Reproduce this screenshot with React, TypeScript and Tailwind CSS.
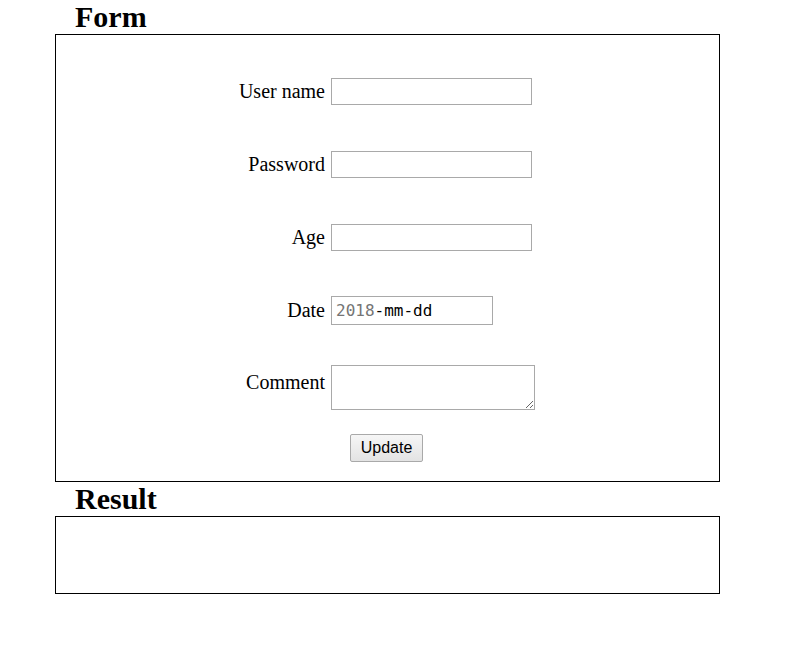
import { useState } from 'react'

const serif = "font-['Liberation_Serif','Times_New_Roman',serif]"

const Field = ({ label }: { label: string }) => (
  <div className="flex h-[73px] w-[303px] items-center">
    <label className="mb-[2px] w-[89px] text-right text-[20px] leading-[24px]">{label}</label>
    <input
      type="text"
      className="ml-[6px] h-[27px] w-[201px] border border-[#a9a9a9] bg-white px-[2px] text-[14px] outline-none"
    />
  </div>
)

export default function App() {
  const [comment, setComment] = useState('')

  return (
    <div className={`min-h-[646px] bg-white text-black ${serif}`}>
      <div className="ml-[55px] w-[665px]">
        <h2 className="h-[34px] pl-[20px] text-[30px] font-bold leading-[34px]">Form</h2>

        {/* Form box */}
        <div className="flex flex-col items-center border border-black pt-[20px] pb-[19px]">
          <Field label="User name" />
          <Field label="Password" />
          <Field label="Age" />

          <div className="flex h-[73px] w-[303px] items-center">
            <label className="mb-[2px] w-[89px] text-right text-[20px] leading-[24px]">Date</label>
            <div className="ml-[6px] flex h-[29px] w-[162px] items-center border border-[#a9a9a9] pl-[4px] font-['DejaVu_Sans_Mono',monospace] text-[16px]">
              <span className="text-[#757575]">2018</span>
              <span>-mm-dd</span>
            </div>
          </div>

          <div className="flex w-[303px] items-start pt-[18px]">
            <label className="mt-[5px] w-[89px] text-right text-[20px] leading-[24px]">Comment</label>
            <textarea
              value={comment}
              onChange={(e) => setComment(e.target.value)}
              className="ml-[6px] block h-[45px] w-[204px] border border-[#a9a9a9] bg-white text-[13px] outline-none"
            />
          </div>

          <button className="mt-[24px] mr-[2px] h-[28px] w-[73px] rounded-[2px] border border-[#a9a9a9] bg-gradient-to-b from-[#f6f6f6] to-[#e3e3e3] font-['Liberation_Sans',Arial,sans-serif] text-[16px] leading-none">
            Update
          </button>
        </div>

        <h2 className="h-[34px] pl-[20px] text-[30px] font-bold leading-[34px]">Result</h2>

        {/* Result box */}
        <div className="h-[78px] border border-black"></div>
      </div>
    </div>
  )
}
